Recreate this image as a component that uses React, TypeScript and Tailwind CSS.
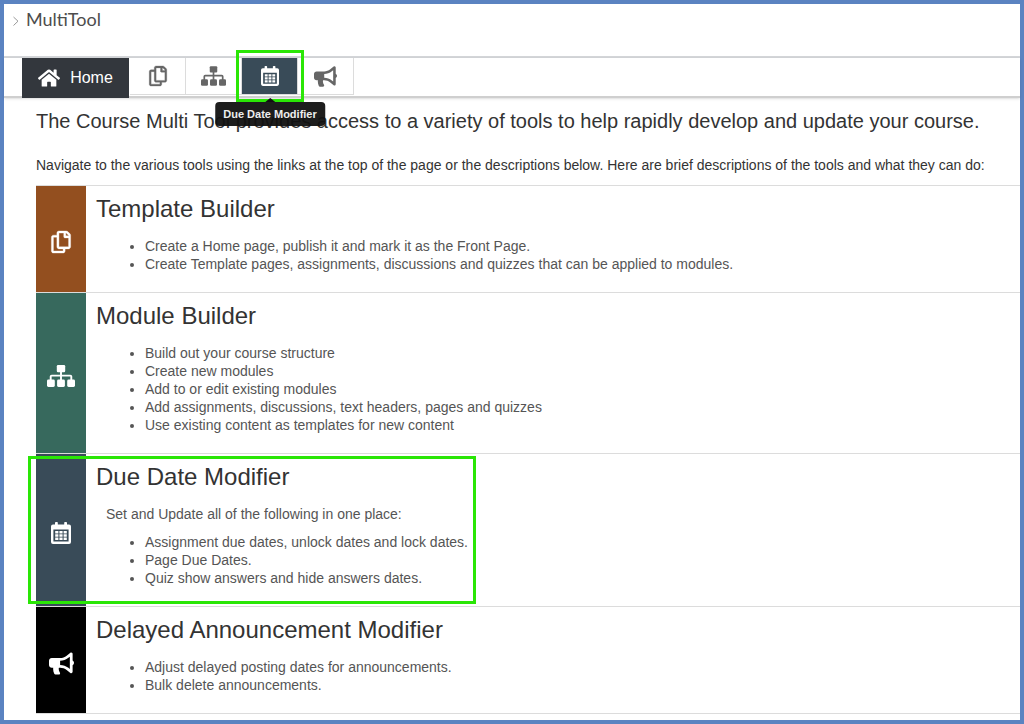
import type { ReactNode } from "react";
import { FaBullhorn, FaHome, FaRegCopy } from "react-icons/fa";

type IconProps = { className?: string };

type Tool = {
  id: string;
  title: string;
  icon: (props: IconProps) => ReactNode;
  tabIcon: string;
  sectionIcon: string;
  color: string;
  intro?: string;
  items: string[];
  highlighted?: boolean;
};

function CopyIcon({ className = "" }: IconProps) {
  return <FaRegCopy className={`overflow-visible stroke-[8] ${className}`} />;
}

function BullhornIcon({ className = "" }: IconProps) {
  return <FaBullhorn className={className} />;
}

function SitemapIcon({ className = "" }: IconProps) {
  return (
    <svg aria-hidden="true" viewBox="0 0 28 22" className={className}>
      <g fill="currentColor">
        <rect x="9.8" y="0" width="8.4" height="7.2" rx="1.2" />
        <rect x="0" y="14.6" width="7.8" height="7.4" rx="1.4" />
        <rect x="10.1" y="14.6" width="7.8" height="7.4" rx="1.4" />
        <rect x="20.2" y="14.6" width="7.8" height="7.4" rx="1.4" />
      </g>
      <path
        d="M14 6.5 V15.5 M3.7 15.5 V11.6 Q3.7 10.6 4.7 10.6 H23.3 Q24.3 10.6 24.3 11.6 V15.5"
        fill="none"
        stroke="currentColor"
        strokeWidth="1.9"
      />
    </svg>
  );
}

function CalendarIcon({ className = "" }: IconProps) {
  return (
    <svg aria-hidden="true" viewBox="0 0 20 22" className={className} fill="currentColor">
      <rect x="4" y="0" width="2.8" height="5" rx="0.8" />
      <rect x="13.2" y="0" width="2.8" height="5" rx="0.8" />
      <path
        fillRule="evenodd"
        d="M2 2.4 H18 A2 2 0 0 1 20 4.4 V20 A2 2 0 0 1 18 22 H2 A2 2 0 0 1 0 20 V4.4 A2 2 0 0 1 2 2.4 Z M2.4 7.4 V19.6 H17.6 V7.4 Z"
      />
      <path d="M4.2 9 h3.2 v2.5 h-3.2 z m4.2 0 h3.2 v2.5 h-3.2 z m4.2 0 h3.2 v2.5 h-3.2 z M4.2 12.3 h3.2 v2.5 h-3.2 z m4.2 0 h3.2 v2.5 h-3.2 z m4.2 0 h3.2 v2.5 h-3.2 z M4.2 15.6 h3.2 v2.5 h-3.2 z m4.2 0 h3.2 v2.5 h-3.2 z m4.2 0 h3.2 v2.5 h-3.2 z" />
    </svg>
  );
}

const tools: Tool[] = [
  {
    id: "template-builder",
    title: "Template Builder",
    icon: CopyIcon,
    tabIcon: "size-5",
    sectionIcon: "size-[22px]",
    color: "bg-[#934f1f]",
    items: [
      "Create a Home page, publish it and mark it as the Front Page.",
      "Create Template pages, assignments, discussions and quizzes that can be applied to modules.",
    ],
  },
  {
    id: "module-builder",
    title: "Module Builder",
    icon: SitemapIcon,
    tabIcon: "w-[25px] h-5",
    sectionIcon: "w-7 h-[22px]",
    color: "bg-[#37695d]",
    items: [
      "Build out your course structure",
      "Create new modules",
      "Add to or edit existing modules",
      "Add assignments, discussions, text headers, pages and quizzes",
      "Use existing content as templates for new content",
    ],
  },
  {
    id: "due-date-modifier",
    title: "Due Date Modifier",
    icon: CalendarIcon,
    tabIcon: "w-[18px] h-5",
    sectionIcon: "w-5 h-[22px]",
    color: "bg-[#394b58]",
    intro: "Set and Update all of the following in one place:",
    items: [
      "Assignment due dates, unlock dates and lock dates.",
      "Page Due Dates.",
      "Quiz show answers and hide answers dates.",
    ],
    highlighted: true,
  },
  {
    id: "announcement-modifier",
    title: "Delayed Announcement Modifier",
    icon: BullhornIcon,
    tabIcon: "size-[23px]",
    sectionIcon: "size-[25px]",
    color: "bg-black",
    items: ["Adjust delayed posting dates for announcements.", "Bulk delete announcements."],
  },
];

function Highlight({ className }: { className: string }) {
  return (
    <span
      aria-hidden="true"
      className={`pointer-events-none absolute border-3 border-[#2ae606] ${className}`}
    />
  );
}

function Tooltip({ children }: { children: ReactNode }) {
  return (
    <span
      role="tooltip"
      className="absolute top-11 left-1/2 z-20 -translate-x-1/2 rounded bg-[#111]/95 px-2 py-1 text-[11px] leading-4 font-bold whitespace-nowrap text-[#eee]"
    >
      <svg
        aria-hidden="true"
        viewBox="0 0 10 4"
        className="absolute bottom-full left-1/2 h-1 w-2.5 -translate-x-1/2 fill-[#111]"
      >
        <path d="M0 4 L5 0 L10 4 Z" />
      </svg>
      {children}
    </span>
  );
}

function NavTab({ tool }: { tool: Tool }) {
  const Icon = tool.icon;
  return (
    <li className="relative">
      <a
        href={`#${tool.id}`}
        aria-label={tool.title}
        className={`flex h-[37px] w-14 items-center justify-center border-r border-b border-[#dcdcdc] ${
          tool.highlighted ? "bg-[#394b58] text-white" : "bg-white text-[#666]"
        }`}
      >
        <Icon className={tool.tabIcon} />
      </a>
      {tool.highlighted && (
        <>
          <Highlight className="-inset-x-1.5 -top-2 -bottom-1.5 z-10" />
          <Tooltip>{tool.title}</Tooltip>
        </>
      )}
    </li>
  );
}

function ToolSection({ tool }: { tool: Tool }) {
  const Icon = tool.icon;
  return (
    <section id={tool.id} className="relative flex border-t border-[#dcdcdc]">
      <div className={`flex w-[50px] shrink-0 items-center justify-center pt-1.5 text-white ${tool.color}`}>
        <Icon className={tool.sectionIcon} />
      </div>
      <div className="grow px-2.5 pt-2 pb-[19px]">
        <h2 className="text-2xl leading-[29px] text-[#333]">{tool.title}</h2>
        <div className="mt-3.5 text-sm leading-[18px] text-[#555]">
          {tool.intro && <p className="mb-2.5 pl-2.5">{tool.intro}</p>}
          <ul className="list-disc pl-[49px]">
            {tool.items.map((item) => (
              <li key={item}>{item}</li>
            ))}
          </ul>
        </div>
      </div>
      {tool.highlighted && <Highlight className="top-0.5 bottom-0.5 -left-2 w-[448px]" />}
    </section>
  );
}

export default function App() {
  return (
    <div className="min-h-screen border-4 border-[#5b83c1] bg-white font-['Liberation_Sans',Arial,sans-serif] text-[#333]">
      <header className="flex h-[54px] items-start gap-1.5 border-b-2 border-[#d4d6d9] px-2 pt-1">
        <svg
          aria-hidden="true"
          viewBox="0 0 8 12"
          className="mt-[7px] h-3 w-2 fill-none stroke-[#999]"
        >
          <path d="M1.5 2 L6 6.2 L1.5 10.5" />
        </svg>
        <span className="font-[Lato,sans-serif] text-lg leading-[22px] text-[#4d4d4d]">MultiTool</span>
      </header>

      <nav aria-label="Tools" className="border-b-2 border-[#cfcfcf] pl-[18px] shadow-sm">
        <ul className="flex h-[38px]">
          <li className="pr-px">
            <a
              href="#home"
              className="flex h-10 w-[107px] items-center justify-center gap-2.5 bg-[#33373d] text-base text-white"
            >
              <FaHome className="size-[22px]" />
              Home
            </a>
          </li>
          {tools.map((tool) => (
            <NavTab key={tool.id} tool={tool} />
          ))}
        </ul>
      </nav>

      <main id="home" className="pb-1.5 pl-8">
        <h1 className="pt-[9px] text-xl leading-7">
          The Course Multi Tool provides access to a variety of tools to help rapidly develop and update your course.
        </h1>
        <p className="mt-5 mb-2.5 text-sm leading-5">
          Navigate to the various tools using the links at the top of the page or the descriptions below. Here are brief
          descriptions of the tools and what they can do:
        </p>
        <div className="border-b border-[#dcdcdc]">
          {tools.map((tool) => (
            <ToolSection key={tool.id} tool={tool} />
          ))}
        </div>
      </main>
    </div>
  );
}
